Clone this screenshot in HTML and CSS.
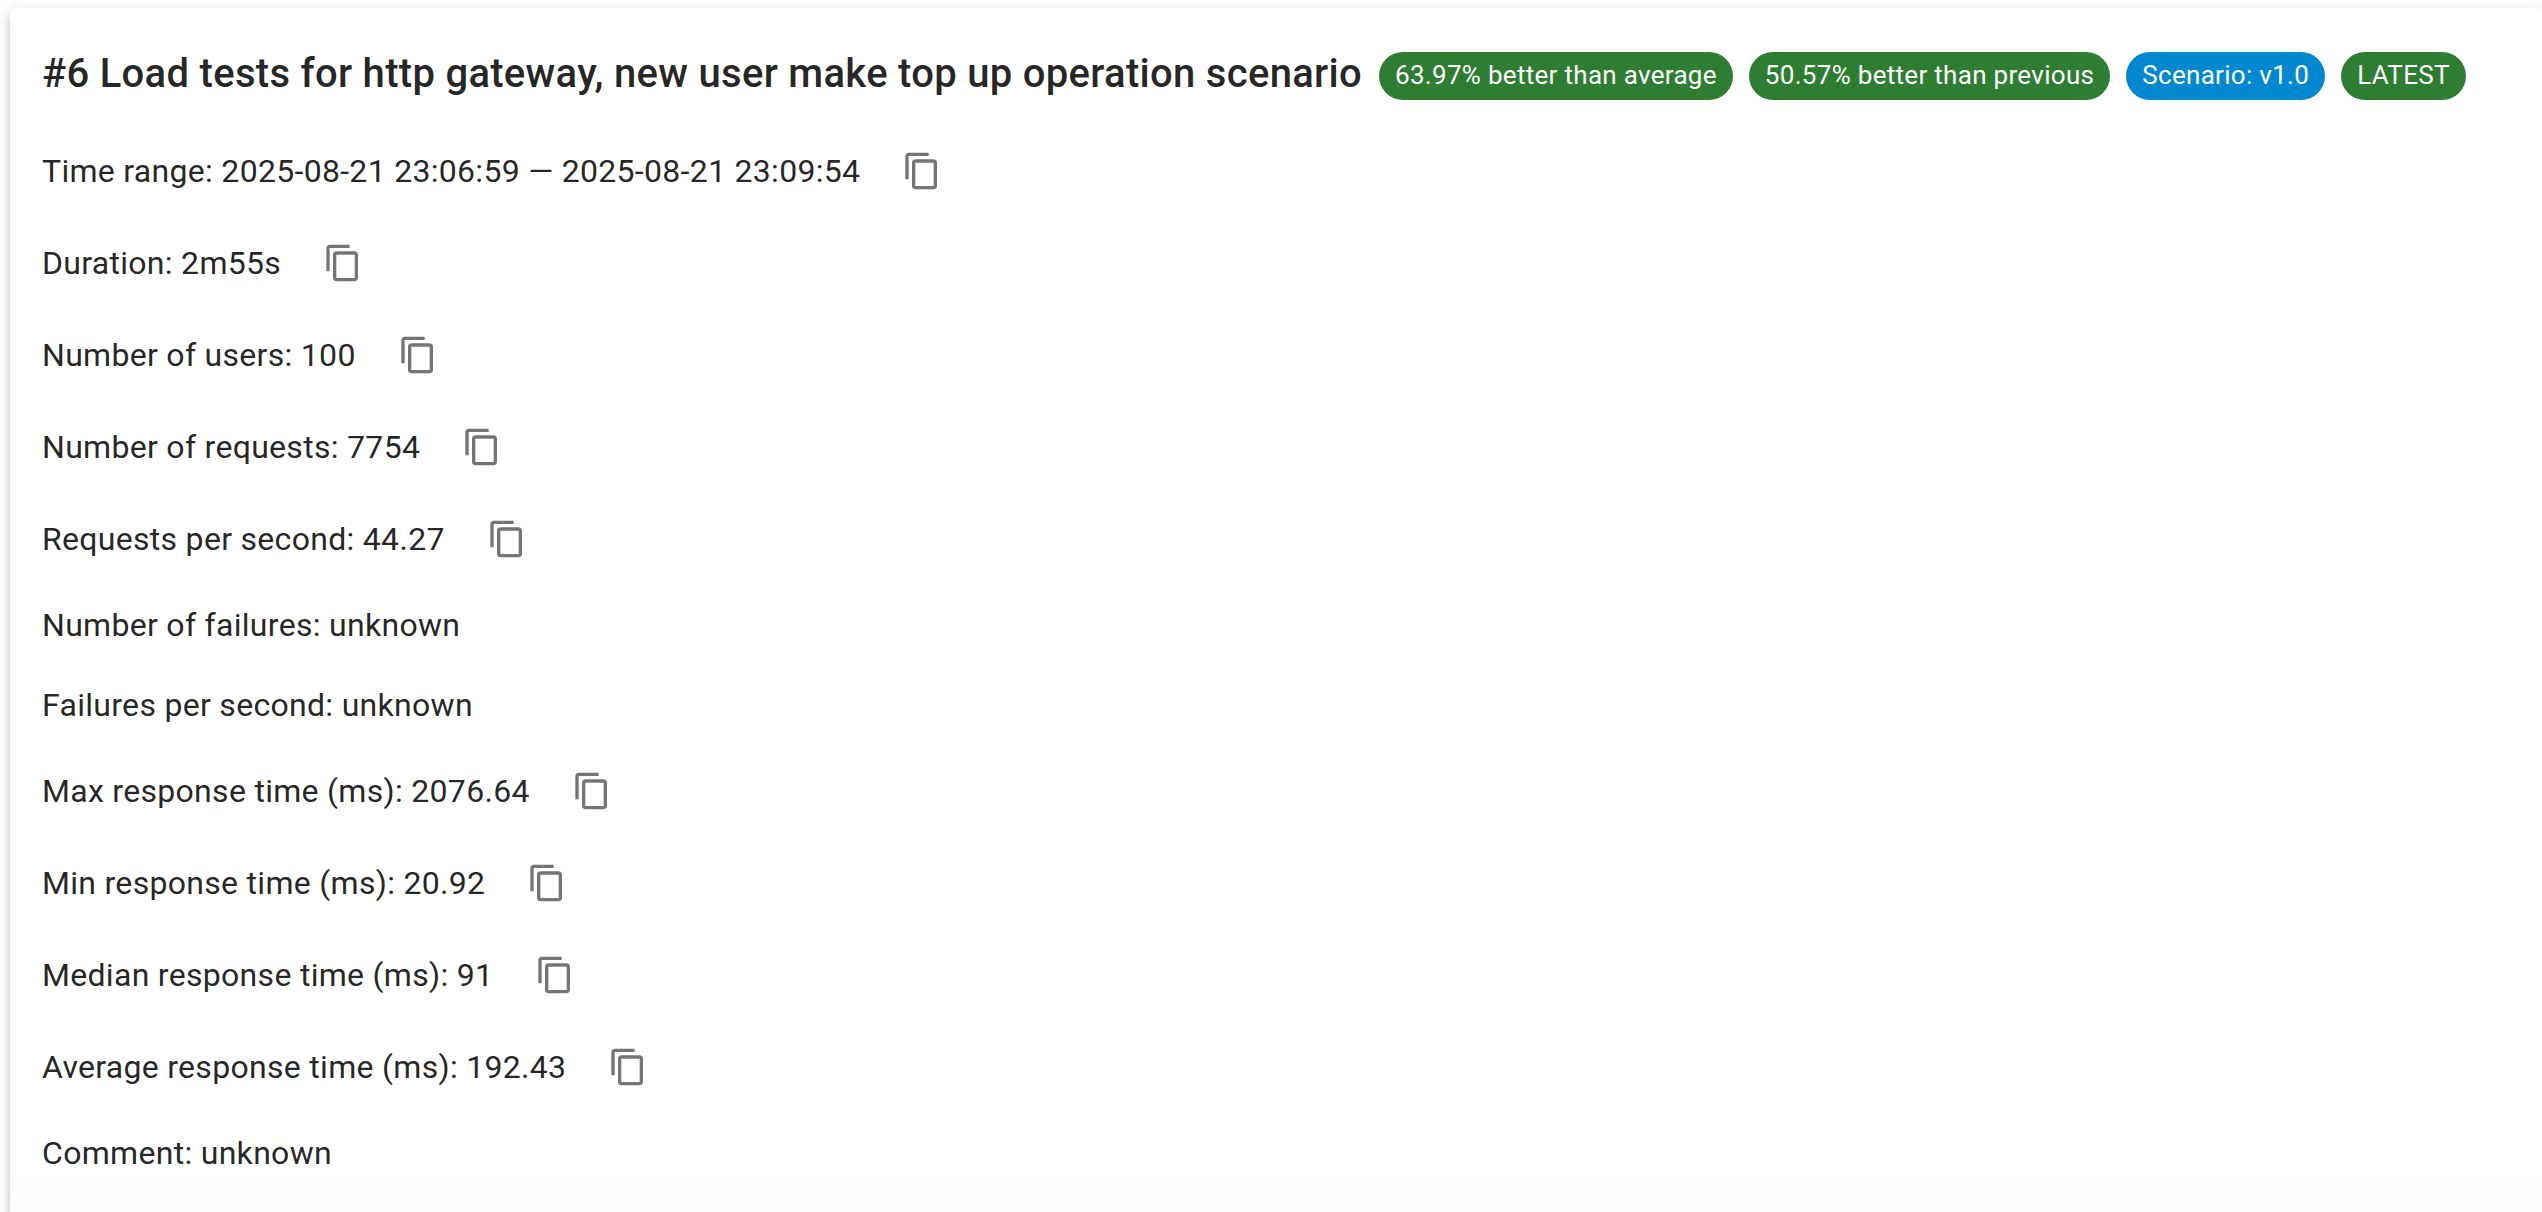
FILE: index.html
```
<!DOCTYPE html>
<html lang="en">
<head>
<meta charset="utf-8">
<title>Load test report</title>
<link rel="stylesheet" href="styles.css">
</head>
<body>
<svg class="sprite" aria-hidden="true">
  <symbol id="copy" viewBox="0 0 24 24"><path d="M16 1H4c-1.100 0-2 .9-2 2v14h2V3h12zm3 4H8c-1.100 0-2 .9-2 2v14c0 1.100.9 2 2 2h11c1.100 0 2-.9 2-2V7c0-1.100-.9-2-2-2m0 16H8V7h11z"/></symbol>
</svg>
<main class="card">
  <header class="header">
    <h1 class="title">#6 Load tests for http gateway, new user make top up operation scenario</h1>
    <div class="chips">
      <span class="chip">63.97% better than average</span>
      <span class="chip">50.57% better than previous</span>
      <span class="chip chip-info">Scenario: v1.0</span>
      <span class="chip">LATEST</span>
    </div>
  </header>
  <div class="rows">
    <div class="row"><span>Time range: 2025-08-21 23:06:59 — 2025-08-21 23:09:54</span><button class="copy" aria-label="Copy"><svg><use href="#copy"/></svg></button></div>
    <div class="row"><span>Duration: 2m55s</span><button class="copy" aria-label="Copy"><svg><use href="#copy"/></svg></button></div>
    <div class="row"><span>Number of users: 100</span><button class="copy" aria-label="Copy"><svg><use href="#copy"/></svg></button></div>
    <div class="row"><span>Number of requests: 7754</span><button class="copy" aria-label="Copy"><svg><use href="#copy"/></svg></button></div>
    <div class="row"><span>Requests per second: 44.27</span><button class="copy" aria-label="Copy"><svg><use href="#copy"/></svg></button></div>
    <div class="row"><span>Number of failures: unknown</span></div>
    <div class="row"><span>Failures per second: unknown</span></div>
    <div class="row"><span>Max response time (ms): 2076.64</span><button class="copy" aria-label="Copy"><svg><use href="#copy"/></svg></button></div>
    <div class="row"><span>Min response time (ms): 20.92</span><button class="copy" aria-label="Copy"><svg><use href="#copy"/></svg></button></div>
    <div class="row"><span>Median response time (ms): 91</span><button class="copy" aria-label="Copy"><svg><use href="#copy"/></svg></button></div>
    <div class="row"><span>Average response time (ms): 192.43</span><button class="copy" aria-label="Copy"><svg><use href="#copy"/></svg></button></div>
    <div class="row"><span>Comment: unknown</span></div>
  </div>
</main>
</body>
</html>
```
FILE: styles.css
```
* { box-sizing: border-box; }

html, body { height: 100%; }

body {
  margin: 0;
  padding: 8px 0 0 10px;
  overflow: hidden;
  background: #fff;
  color: rgba(0, 0, 0, 0.87);
  font-family: Roboto, "Liberation Sans", sans-serif;
}

.sprite { display: none; }

.card {
  width: 2532px;
  height: 1260px;
  padding: 32px;
  border-radius: 8px;
  background: linear-gradient(#fff 1165px, #fafafa 1204px);
  box-shadow: 0 6px 6px -4px rgba(0, 0, 0, 0.2), 0 6px 8px 0 rgba(0, 0, 0, 0.14), 0 2px 16px 0 rgba(0, 0, 0, 0.12);
}

.header {
  display: flex;
  align-items: flex-start;
  gap: 17px;
  height: 69px;
}

.title {
  margin: 0;
  font-size: 40px;
  font-weight: 500;
  line-height: 68px;
  letter-spacing: 0.3px;
  white-space: nowrap;
}

.chips {
  display: flex;
  gap: 16px;
  padding-top: 12px;
}

.chip {
  height: 48px;
  padding: 0 16px;
  border-radius: 24px;
  background: #2e7d32;
  color: #fff;
  font-size: 26px;
  line-height: 46px;
  letter-spacing: 0.3px;
  white-space: nowrap;
}

.chip-info { background: #0288d1; }

.rows {
  display: flex;
  flex-direction: column;
  gap: 32px;
  padding-top: 32px;
}

.row {
  display: flex;
  align-items: center;
  gap: 32px;
  font-size: 32px;
  line-height: 48px;
  letter-spacing: 0.3px;
  white-space: nowrap;
}

.copy {
  display: flex;
  padding: 10px;
  border: 0;
  background: none;
}

.copy svg {
  width: 40px;
  height: 40px;
  fill: rgba(0, 0, 0, 0.54);
}
```
